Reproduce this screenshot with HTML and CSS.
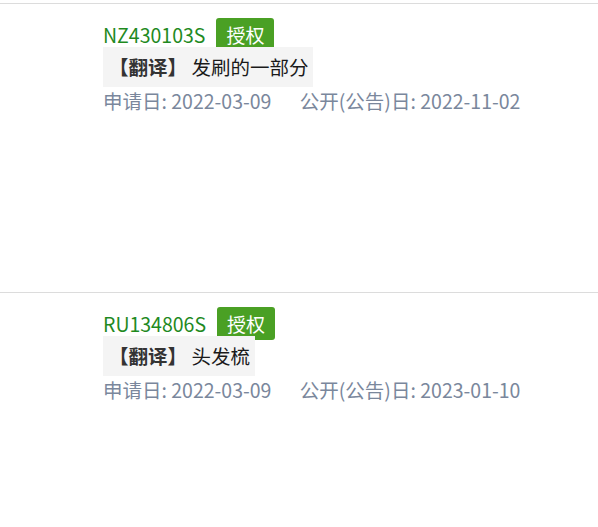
FILE: index.html
```html
<!DOCTYPE html>
<html lang="zh-CN">
<head>
<meta charset="utf-8">
<link rel="stylesheet" href="styles.css">
</head>
<body>
<div class="list">
  <div class="item">
    <div class="head">
      <span class="pn">NZ430103S</span>
      <span class="badge">授权</span>
    </div>
    <div class="trans"><span class="tag">【翻译】</span> 发刷的一部分</div>
    <div class="dates">
      <span class="date">申请日: 2022-03-09</span>
      <span class="date">公开(公告)日: 2022-11-02</span>
    </div>
  </div>
  <div class="item">
    <div class="head">
      <span class="pn">RU134806S</span>
      <span class="badge">授权</span>
    </div>
    <div class="trans"><span class="tag">【翻译】</span> 头发梳</div>
    <div class="dates">
      <span class="date">申请日: 2022-03-09</span>
      <span class="date">公开(公告)日: 2023-01-10</span>
    </div>
  </div>
</div>
</body>
</html>
```
FILE: styles.css
```css
html, body {
  margin: 0;
  padding: 0;
  background: #fff;
}
body {
  font-family: "Noto Sans CJK SC", "Noto Sans", sans-serif;
  font-size: 19.5px;
  color: #222;
}
.list {
  padding-top: 3px;
}
.item {
  box-sizing: border-box;
  height: 289px;
  border-top: 1px solid #dcdcdc;
  padding-left: 103px;
}
.item:last-child {
  height: auto;
}
.head {
  display: flex;
  align-items: center;
  height: 33px;
  margin-top: 14px;
  margin-bottom: -4px;
}
.pn {
  color: #1f8a1f;
  font-size: 19.5px;
  line-height: 33px;
}
.badge {
  margin-left: 11px;
  background: #4aa024;
  color: #fff;
  border-radius: 3px;
  height: 33px;
  line-height: 33px;
  padding: 0 10px;
  font-size: 19px;
}
.trans {
  display: inline-block;
  background: #f4f4f4;
  height: 40px;
  line-height: 40px;
  padding: 0 5px 0 6px;
  font-size: 19.5px;
  color: #1a1a1a;
}
.tag {
  font-weight: bold;
  color: #333;
}
.dates {
  line-height: 28px;
  color: #7a879c;
  font-size: 19.5px;
}
.date {
  margin-right: 24px;
}
```
